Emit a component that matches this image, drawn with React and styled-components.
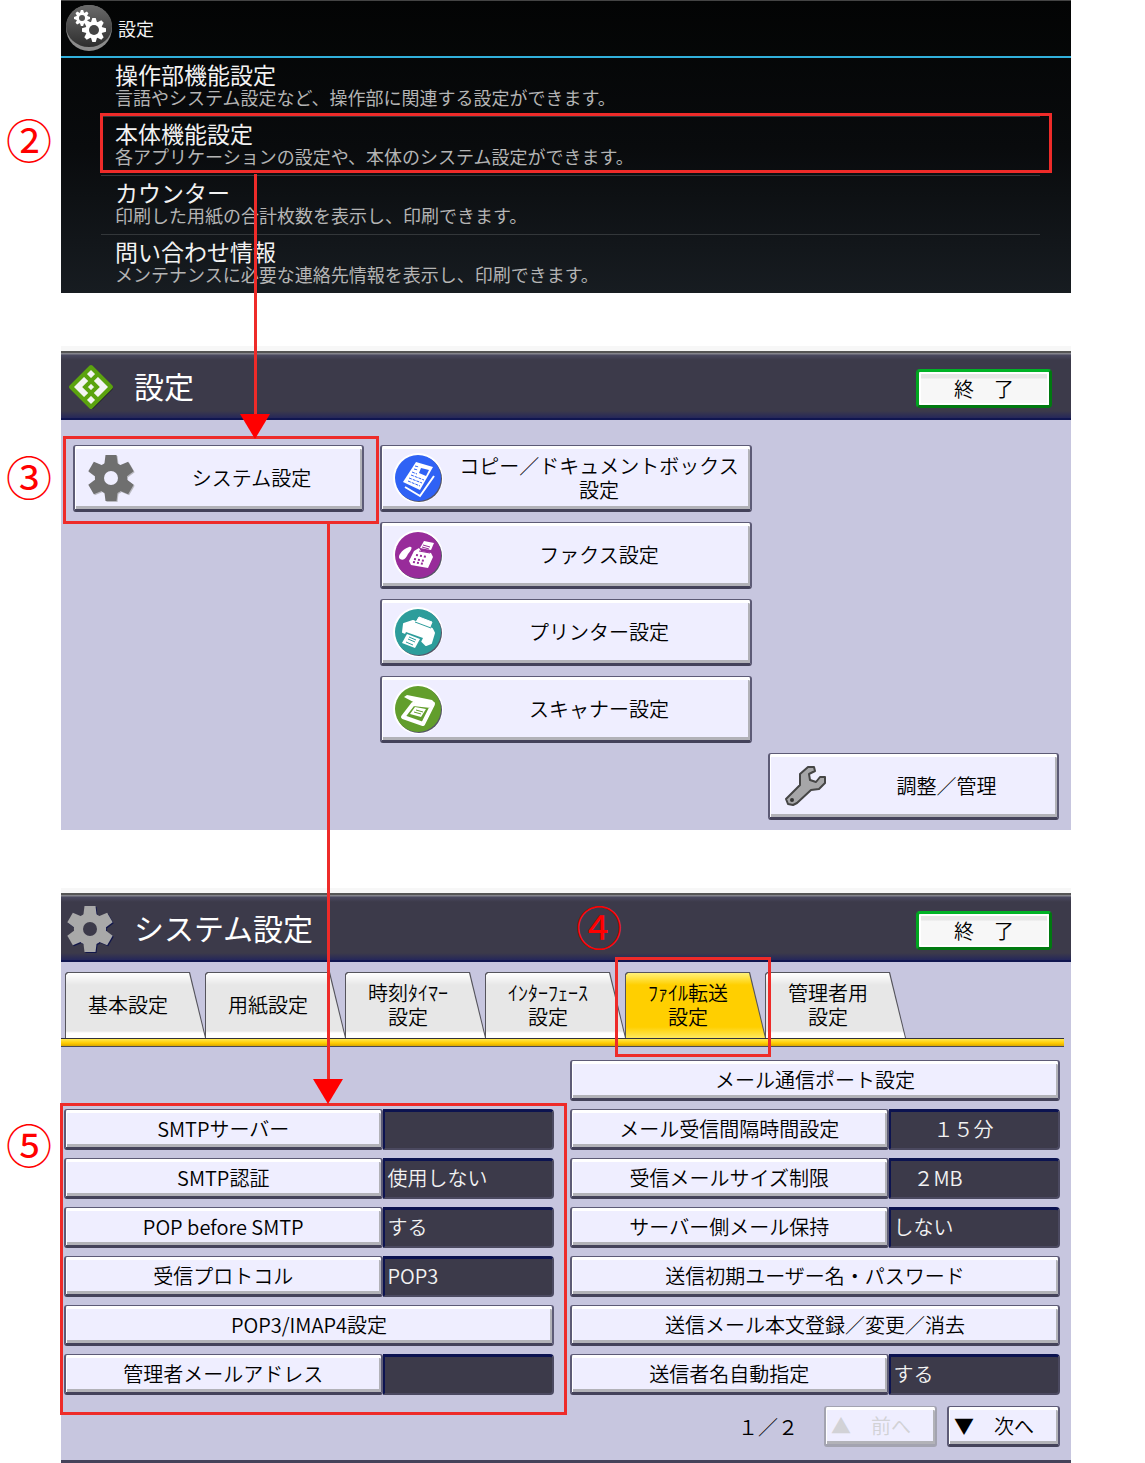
import React from "react";
import styled, { createGlobalStyle, css } from "styled-components";

const ROOT_MENU = [
  {
    title: "操作部機能設定",
    text: "言語やシステム設定など、操作部に関連する設定ができます。",
  },
  {
    title: "本体機能設定",
    text: "各アプリケーションの設定や、本体のシステム設定ができます。",
    step: true,
  },
  {
    title: "カウンター",
    text: "印刷した用紙の合計枚数を表示し、印刷できます。",
  },
  {
    title: "問い合わせ情報",
    text: "メンテナンスに必要な連絡先情報を表示し、印刷できます。",
  },
];

const TABS = [
  ["基本設定"],
  ["用紙設定"],
  ["時刻ﾀｲﾏｰ", "設定"],
  ["ｲﾝﾀｰﾌｪｰｽ", "設定"],
  ["ﾌｧｲﾙ転送", "設定"],
  ["管理者用", "設定"],
];
const ACTIVE_TAB = 4;

const LEFT_SETTINGS = [
  { label: "SMTPサーバー", value: "" },
  { label: "SMTP認証", value: "使用しない" },
  { label: "POP before SMTP", value: "する" },
  { label: "受信プロトコル", value: "POP3" },
  { label: "POP3/IMAP4設定" },
  { label: "管理者メールアドレス", value: "" },
];

const RIGHT_SETTINGS = [
  { label: "メール通信ポート設定" },
  { label: "メール受信間隔時間設定", value: "　　１５分" },
  { label: "受信メールサイズ制限", value: "　２MB" },
  { label: "サーバー側メール保持", value: "しない" },
  { label: "送信初期ユーザー名・パスワード" },
  { label: "送信メール本文登録／変更／消去" },
  { label: "送信者名自動指定", value: "する" },
];

const Cog = ({ cx, cy, r, teeth, hole, fill, holeFill }) => (
  <g transform={`translate(${cx} ${cy})`}>
    {Array.from({ length: teeth }, (_, i) => (
      <path
        key={i}
        transform={`rotate(${(360 / teeth) * i})`}
        fill={fill}
        d={`M${-r * 0.3} ${-r * 0.5} L${-r * (teeth > 6 ? 0.14 : 0.24)} ${-r} H${
          r * (teeth > 6 ? 0.14 : 0.24)
        } L${r * 0.3} ${-r * 0.5}Z`}
      />
    ))}
    <circle r={r * 0.7} fill={fill} />
    <circle r={hole} fill={holeFill} />
  </g>
);

const RootIcon = () => (
  <svg width="48" height="48" viewBox="0 0 48 48" aria-hidden="true">
    <defs>
      <linearGradient id="ball" x1="0" y1="0" x2="0" y2="1">
        <stop offset="0" stopColor="#6a6a6a" />
        <stop offset="1" stopColor="#2e2e2e" />
      </linearGradient>
    </defs>
    <circle cx="24" cy="24" r="23" fill="#8b8b8b" />
    <ellipse cx="24" cy="22" rx="23" ry="21" fill="url(#ball)" />
    <Cog cx={17} cy={14} r={8} teeth={8} hole={3} fill="#fff" holeFill="#555" />
    <Cog cx={29} cy={26} r={12} teeth={8} hole={5} fill="#fff" holeFill="#444" />
  </svg>
);

const GearIcon = ({ fill, holeFill, shadow }) => (
  <svg width="48" height="48" viewBox="0 0 48 48" aria-hidden="true">
    <Cog cx={25} cy={25} r={23} teeth={6} hole={7} fill={shadow} holeFill={shadow} />
    <Cog cx={24} cy={24} r={23} teeth={6} hole={7} fill={fill} holeFill={holeFill} />
  </svg>
);

const DiamondIcon = () => (
  <svg width="48" height="48" viewBox="0 0 48 48" aria-hidden="true">
    <path d="M26 6 45 25 26 44 7 25Z" fill="#1d1c28" stroke="#1d1c28" strokeWidth="4" strokeLinejoin="round" />
    <path d="M25 4 45 24 25 44 5 24Z" fill="#5ba30f" stroke="#5ba30f" strokeWidth="4" strokeLinejoin="round" />
    <path d="M25 7 42 24 25 41 8 24Z" fill="#f4f4f4" />
    <g fill="none" stroke="#5ba30f" strokeWidth="4">
      <path d="M25 18 31 24 25 30 19 24Z" />
      <path d="M18 11 25 18 32 11M18 37 25 30 32 37" />
    </g>
  </svg>
);

const Disc = ({ fill, children }) => (
  <svg width="50" height="50" viewBox="0 0 50 50" aria-hidden="true">
    <circle cx="25" cy="25" r="25" fill="#fff" />
    <circle cx="26" cy="26" r="23" fill="#555469" />
    <circle cx="25" cy="25" r="23" fill={fill} />
    {children}
  </svg>
);

const CopyIcon = () => (
  <Disc fill="#2f62f5">
    <path d="M12 34 27 43 41 23" fill="none" stroke="#fff" strokeWidth="2" />
    <path d="M23 9 40 14 27 37 10 29Z" fill="#fff" />
    <path d="M28 15 36 17 33 23 26 20Z" fill="#2f62f5" />
    <g stroke="#2f62f5" strokeWidth="1" strokeDasharray="3 1">
      <path d="M22 13 26 14M21 16 25 17M19 19 24 21M18 22 31 27M16 25 29 30M15 28 27 33" />
    </g>
  </Disc>
);

const FaxIcon = () => (
  <Disc fill="#982c9a">
    <path d="M16 17C20 16 19 20 15 24C13 28 11 31 7 29C4 27 8 20 16 17Z" fill="#fff" />
    <path d="M27 18 31 11 41 13 38 20Z" fill="#fff" />
    <path d="M30 15 37 17M29 17 36 19" stroke="#982c9a" />
    <path d="M21 21 26 18 28 21 38 23 40 27 35 38 18 35 16 31Z" fill="#fff" />
    <path d="M23 25 34 27M21 29 32 31M20 32 31 34" stroke="#982c9a" strokeWidth="2" strokeDasharray="2 2" />
    <path d="M26 21 37 23" stroke="#982c9a" />
  </Disc>
);

const PrinterIcon = () => (
  <Disc fill="#2d9d9b">
    <path d="M23 15 26 10 39 15 37 20Z" fill="#fff" stroke="#fff" strokeLinejoin="round" />
    <path d="M11 17 20 14 39 22 41 26 38 36 33 38 26 31 10 25Z" fill="#fff" stroke="#fff" strokeWidth="2" strokeLinejoin="round" />
    <path d="M22 15 38 21" stroke="#2d9d9b" />
    <path d="M13 25 30 31 24 43 7 37Z" fill="#2d9d9b" />
    <path d="M14 27 27 32 22 41 9 36Z" fill="#fff" />
    <path d="M16 30 23 33M15 32 22 35M13 35 20 38" stroke="#2d9d9b" />
  </Disc>
);

const ScannerIcon = () => (
  <Disc fill="#629e2c">
    <path d="M11 13 14 11 39 16 42 19 37 21 24 20Z" fill="#fff" />
    <path d="M20 20 38 22 40 20 30 40 10 33Z" fill="none" stroke="#fff" strokeWidth="4" strokeLinejoin="round" />
    <path d="M22 23 33 25 28 33 17 30Z" fill="#fff" />
    <path d="M23 26 30 28M21 28 28 30" stroke="#629e2c" />
  </Disc>
);

const WrenchIcon = () => (
  <svg width="48" height="48" viewBox="0 0 48 48" aria-hidden="true">
    <path
      d="M26 5H32L33 9 27 12 28 18 34 20 38 15H43V21L37 27 29 28 15 41 11 43 6 42 4 37 18 23V12Z"
      fill="#a6a6a8"
      stroke="#454545"
      strokeWidth="2"
      strokeLinejoin="round"
    />
    <circle cx="10" cy="38" r="2" fill="#333" />
  </svg>
);

const RowLine = ({ item }) => (
  <SettingRow>
    <SettingButton type="button">{item.label}</SettingButton>
    {item.value !== undefined && <SettingValue>{item.value}</SettingValue>}
  </SettingRow>
);

const App = () => (
  <Page>
    <GlobalStyle />

    <RootPanel>
      <RootHeader>
        <RootIcon />
        <RootTitle>設定</RootTitle>
      </RootHeader>
      <RootList>
        {ROOT_MENU.map((item) => (
          <RootItem key={item.title}>
            <RootButton type="button">
              <strong>{item.title}</strong>
              <span>{item.text}</span>
            </RootButton>
            {item.step && (
              <>
                <Frame $inset="-4px -12px 2px -1px" />
                <StepNumber $left={-94} $top={-1}>②</StepNumber>
                <Arrow $left={153} $top={57} $length={265} />
              </>
            )}
          </RootItem>
        ))}
      </RootList>
    </RootPanel>

    <Panel $gap={58}>
      <PanelHeader>
        <DiamondIcon />
        <PanelTitle>設定</PanelTitle>
        <ExitButton type="button">終　了</ExitButton>
      </PanelHeader>
      <MenuGrid>
        <MenuCell>
          <MenuButton type="button">
            <IconSlot>
              <GearIcon fill="#6f6f6f" holeFill="#efeeff" shadow="#b9b9c0" />
            </IconSlot>
            <span>システム設定</span>
          </MenuButton>
          <Frame $inset="-9px -15px -12px -10px" />
          <StepNumber $left={-66} $top={8}>③</StepNumber>
          <Arrow $left={254} $top={79} $length={580} />
        </MenuCell>
        <MenuColumn>
          <MenuButton type="button">
            <IconSlot><CopyIcon /></IconSlot>
            <span>コピー／ドキュメントボックス<br />設定</span>
          </MenuButton>
          <MenuButton type="button">
            <IconSlot><FaxIcon /></IconSlot>
            <span>ファクス設定</span>
          </MenuButton>
          <MenuButton type="button">
            <IconSlot><PrinterIcon /></IconSlot>
            <span>プリンター設定</span>
          </MenuButton>
          <MenuButton type="button">
            <IconSlot><ScannerIcon /></IconSlot>
            <span>スキャナー設定</span>
          </MenuButton>
        </MenuColumn>
        <AdminCell>
          <MenuButton type="button">
            <IconSlot><WrenchIcon /></IconSlot>
            <span>調整／管理</span>
          </MenuButton>
        </AdminCell>
      </MenuGrid>
    </Panel>

    <Panel $gap={63} $closed>
      <PanelHeader>
        <GearIcon fill="#a9a9a9" holeFill="#3c3a4a" shadow="#10154a" />
        <PanelTitle>システム設定</PanelTitle>
        <ExitButton type="button">終　了</ExitButton>
      </PanelHeader>

      <TabList role="tablist">
        {TABS.map((lines, i) => (
          <TabItem key={lines.join("")}>
            <Tab
              type="button"
              role="tab"
              aria-selected={i === ACTIVE_TAB}
              $active={i === ACTIVE_TAB}
            >
              {lines.map((line) => (
                <span key={line}>{line}</span>
              ))}
            </Tab>
            {i === ACTIVE_TAB && (
              <>
                <Frame $inset="-15px -6px -19px -10px" />
                <StepNumber $left={-48} $top={-69}>④</StepNumber>
              </>
            )}
          </TabItem>
        ))}
      </TabList>
      <TabBar />

      <SettingGrid>
        <SettingColumn>
          {LEFT_SETTINGS.map((item) => (
            <RowLine key={item.label} item={item} />
          ))}
          <Frame $inset="-6px -13px -20px -4px" />
          <StepNumber $left={-57} $top={12}>⑤</StepNumber>
        </SettingColumn>
        <SettingColumn>
          {RIGHT_SETTINGS.map((item) => (
            <RowLine key={item.label} item={item} />
          ))}
        </SettingColumn>
      </SettingGrid>

      <Pager>
        <PageCount>１／２</PageCount>
        <PageButton type="button" disabled>▲　前へ</PageButton>
        <PageButton type="button">▼　次へ</PageButton>
      </Pager>
    </Panel>
  </Page>
);

const GlobalStyle = createGlobalStyle`
  * {
    box-sizing: border-box;
  }

  body {
    margin: 0;
    background: #fff;
    font-family: "Noto Sans CJK JP", sans-serif;
    font-weight: 350;
  }

  button {
    padding: 0;
    font: inherit;
    color: inherit;
    cursor: pointer;
  }

  svg {
    display: block;
    flex: none;
  }
`;

const Page = styled.main`
  padding: 0 74px 0 61px;
`;

/* red guide marks drawn over the panels */

const Frame = styled.div`
  position: absolute;
  inset: ${({ $inset }) => $inset};
  z-index: 2;
  border: 3px solid #ee2b29;
  pointer-events: none;
`;

const StepNumber = styled.span`
  position: absolute;
  left: ${({ $left }) => $left}px;
  top: ${({ $top }) => $top}px;
  z-index: 2;
  display: flex;
  align-items: center;
  justify-content: center;
  width: 44px;
  height: 44px;
  font-size: 46px;
  font-weight: 400;
  line-height: 44px;
  color: #ff0000;
`;

const Arrow = styled.div`
  position: absolute;
  left: ${({ $left }) => $left}px;
  top: ${({ $top }) => $top}px;
  z-index: 3;
  width: 3px;
  height: ${({ $length }) => $length}px;
  background: linear-gradient(#ee2b29, #ee2b29) no-repeat 0 0 / 100% calc(100% - 9px);
  pointer-events: none;

  &::after {
    content: "";
    position: absolute;
    left: -14px;
    bottom: 0;
    width: 30px;
    height: 25px;
    background: #ff0000;
    clip-path: polygon(0 0, 100% 0, 50% 100%);
  }
`;

const RootPanel = styled.section`
  background: linear-gradient(#030404, #090b0d 50%, #171c21);
  border-top: 1px solid #444;
  color: #f2f2f2;
`;

const RootHeader = styled.header`
  display: flex;
  align-items: center;
  gap: 5px;
  height: 57px;
  padding: 0 0 2px 4px;
  border-bottom: 2px solid #31b0dc;
`;

const RootTitle = styled.h1`
  margin: 0;
  font-size: 18px;
  font-weight: 400;
`;

const RootList = styled.ul`
  margin: 0;
  padding: 0 31px 0 40px;
  list-style: none;
`;

const RootItem = styled.li`
  position: relative;

  & + & {
    border-top: 1px solid #33373a;
  }
`;

const RootButton = styled.button`
  display: flex;
  flex-direction: column;
  align-items: flex-start;
  width: 100%;
  height: 58px;
  padding: 4px 0 0 14px;
  border: 0;
  background: none;
  text-align: left;

  strong {
    font-size: 23px;
    font-weight: 400;
    line-height: 24px;
  }

  span {
    font-size: 18px;
    font-weight: 400;
    line-height: 22px;
    color: #b4b4b4;
  }
`;

const Panel = styled.section`
  margin-top: ${({ $gap }) => $gap}px;
  background: #c7c6df;
  border-bottom: ${({ $closed }) => ($closed ? "3px solid #45435a" : "0")};
  box-shadow: 0 -5px #f7f7f7;
  font-size: 20px;
  line-height: 24px;
  color: #000;
`;

const PanelHeader = styled.header`
  display: flex;
  align-items: center;
  height: 69px;
  padding: 2px 19px 0 5px;
  border-top: 2px solid #555;
  border-bottom: 2px solid #101650;
  background: linear-gradient(#84848c 0 1px, #4a4960 2px, #3c3a4a 7px 58px, #25275a);
`;

const PanelTitle = styled.h2`
  flex: 1;
  margin: 0 0 0 20px;
  padding-bottom: 4px;
  font-size: 30px;
  font-weight: 400;
  color: #fff;
`;

const ExitButton = styled.button`
  width: 136px;
  height: 39px;
  margin-top: 4px;
  border: 3px solid;
  border-color: #00b326 #007a10 #007a10 #00a51f;
  border-radius: 4px;
  background: linear-gradient(#fff 0 2px, #e6e6e6 2px 6px, #f7f7f7 7px);
  box-shadow: inset 0 0 0 2px #fff;
`;

const bevel = css`
  border: 2px solid #5d5b76;
  border-top-width: 1px;
  border-bottom: 3px solid #44425a;
  border-radius: 3px;
  background: #efeeff;
  box-shadow: inset 0 3px #fff, inset 1px 0 #fff, inset -2px -3px #b2b2b8;
`;

const MenuGrid = styled.div`
  display: grid;
  grid-template-columns: 291fr 372fr 291fr;
  gap: 10px 16px;
  padding: 25px 12px 10px;
`;

const MenuCell = styled.div`
  position: relative;
  align-self: start;
`;

const MenuColumn = styled.div`
  display: flex;
  flex-direction: column;
  gap: 10px;
`;

const AdminCell = styled.div`
  grid-row: 2;
  grid-column: 3;
`;

const MenuButton = styled.button`
  ${bevel}
  display: flex;
  align-items: center;
  gap: 6px;
  width: 100%;
  height: 67px;
  padding-left: 12px;

  > span:last-child {
    flex: 1;
    text-align: center;
    white-space: nowrap;
  }
`;

const IconSlot = styled.span`
  display: flex;
  justify-content: center;
  width: 48px;
`;

const TabList = styled.div`
  display: flex;
  padding: 10px 0 0 4px;
`;

const TabItem = styled.div`
  position: relative;
  width: 140px;
`;

/* the outline is the dark button itself, ::before is the tab face */
const Tab = styled.button`
  position: relative;
  display: flex;
  flex-direction: column;
  align-items: center;
  justify-content: center;
  width: 141px;
  height: 66px;
  padding-right: 15px;
  border: 0;
  background: #55545c;
  clip-path: polygon(0 2px, 2px 0, 125px 0, 100% 100%, 0 100%);
  white-space: nowrap;

  &::before {
    content: "";
    position: absolute;
    inset: 1px 1px 0;
    background: ${({ $active }) =>
      $active
        ? "linear-gradient(#fff27a, #ffcf00 12px 54px, #ffe95e)"
        : "linear-gradient(#fff, #e7e7e7 12px 58px, #fff 60px)"};
    clip-path: polygon(0 2px, 2px 0, 123px 0, 100% 100%, 0 100%);
  }

  span {
    position: relative;
  }
`;

const TabBar = styled.div`
  height: 9px;
  margin-right: 7px;
  border-top: 1px solid #33323c;
  border-bottom: 1px solid #4a4a55;
  background: linear-gradient(#ffe94d, #ffcb00 60%, #d9a800);
`;

const SettingGrid = styled.div`
  display: grid;
  grid-template-columns: 1fr 1fr;
  align-items: end;
  gap: 16px;
  padding: 13px 11px 0 3px;
`;

const SettingColumn = styled.div`
  position: relative;
  display: flex;
  flex-direction: column;
  gap: 8px;
`;

const SettingRow = styled.div`
  display: flex;
  height: 41px;
`;

const SettingButton = styled.button`
  ${bevel}
  flex: 1;
  white-space: nowrap;
`;

const SettingValue = styled.output`
  display: flex;
  align-items: center;
  flex: 0 0 35%;
  border: 2px solid #0c1350;
  border-top-width: 3px;
  border-right-color: #4b4960;
  border-bottom-color: #4b4960;
  border-radius: 0 4px 4px 0;
  padding: 0 0 2px 3px;
  background: #3c3a4a;
  color: #f2f2f2;
  white-space: pre;
`;

const Pager = styled.div`
  display: flex;
  align-items: center;
  justify-content: flex-end;
  gap: 10px;
  padding: 11px 11px 13px;
`;

const PageCount = styled.span`
  margin-right: 16px;
`;

const PageButton = styled.button`
  ${bevel}
  width: 113px;
  height: 41px;
  padding-left: 5px;
  text-align: left;

  &:disabled {
    border-color: #a3a3b0;
    color: #d2d2d6;
    cursor: default;
  }
`;

export default App;
